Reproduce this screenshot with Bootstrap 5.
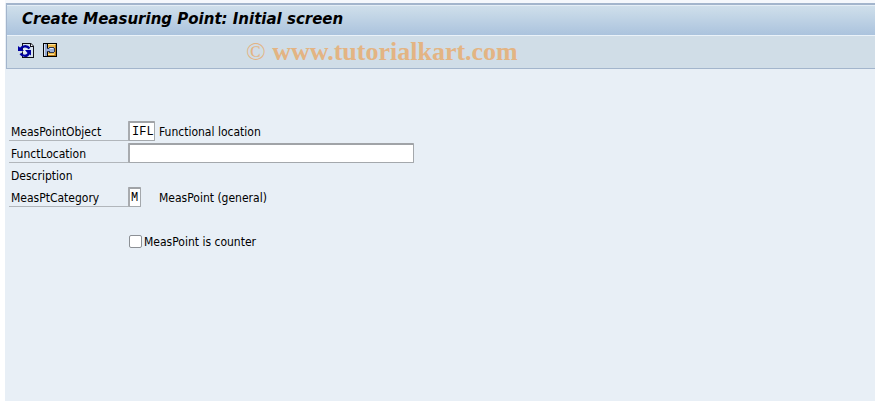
<!DOCTYPE html>
<html lang="en">
<head>
<meta charset="utf-8">
<meta name="viewport" content="width=device-width, initial-scale=1">
<title>Create Measuring Point: Initial screen</title>
<link href="https://cdn.jsdelivr.net/npm/bootstrap@5.3.0/dist/css/bootstrap.min.css" rel="stylesheet">
<style>
body { background: #fff; color: #000; font-family: Tahoma, "DejaVu Sans Condensed", "Noto Sans", sans-serif; font-size: 12px; line-height: 22px; }
.sap-window { margin-left: 5px; background: #e8eff6; }
.sap-top { height: 3px; background: #f5f8fc; }
.sap-head { margin-left: 1px; border: 1px solid #a3b5cc; border-top-width: 2px; border-right-width: 0; background: #d0dde7; }
.sap-title { height: 31px; padding-left: 15px; border-top: 1px solid #e4eef6; border-bottom: 1px solid #eaf2f9; background: linear-gradient(#cfdfeb, #abc3dd); }
.sap-title h1 { font-family: "DejaVu Sans", Verdana, sans-serif; font-size: 15px; line-height: 26px; font-weight: 700; font-style: italic; }
.sap-tools { height: 32px; padding-left: 11px; }
.tool-btn { width: 16px; height: 16px; margin-bottom: 4px; }
.brand-text { margin-left: 188px; font: 700 26px/32px "Liberation Serif", serif; color: #e3b483; }
.brand-text span { font-weight: 400; }
.sap-form { padding: 52px 0 0 4px; row-gap: 2px; }
.field-row { height: 20px; }
.field-label { width: 119px; height: 20px; padding-left: 2px; }
.ruled { border-bottom: 1px solid #b1b6bb; }
.field-box { height: 20px; padding: 0 0 0 2px; border: 1px solid #a4a8ac; border-top: 2px solid #a0a3a7; border-left: 2px solid #a8abaf; border-radius: 1px; background: #fff; color: #000; font: 12px/16px "Courier New", "Liberation Mono", monospace; }
.w-code { width: 27px; }
.w-one { width: 13px; padding-left: 1px; }
.w-long { width: 286px; max-width: calc(100% - 123px); }
.gap-code { margin-left: 4px; }
.gap-one { margin-left: 18px; }
.counter-row { margin-top: 22px; padding-left: 120px; }
.counter-row label { height: 20px; }
.counter-row input { appearance: none; width: 13px; height: 13px; margin: 0 2px 0 0; border: 1px solid #8c9095; border-radius: 2px; background: #fff; }
.counter-row input:checked { background: #4b6a93; }
</style>
<script src="https://cdn.jsdelivr.net/npm/bootstrap@5.3.0/dist/js/bootstrap.bundle.min.js"></script>
</head>
<body>
<main class="sap-window min-vh-100">
  <div class="sap-top"></div>
  <header class="sap-head">
    <div class="sap-title"><h1 class="m-0 text-nowrap">Create Measuring Point: Initial screen</h1></div>
    <div class="sap-tools d-flex align-items-center">
      <button type="button" class="tool-btn btn p-0 border-0 d-flex" aria-label="Other object">
        <svg width="16" height="16" viewBox="0 0 16 16">
          <path d="M4 1h9l3 3v12H4z" fill="#101018"/>
          <path d="M5 2h7v3h3v10H5z" fill="#d6e2ee"/><path d="M13 2v2h2z" fill="#fff"/>
          <circle cx="7" cy="9" r="2.5" fill="#e6edf6"/>
          <path d="M2.5 7.5C3.5 3.8 9 3 11.5 6.5M11 11C9.500 15 4.500 14.500 2.500 11.500" fill="none" stroke="#0000a0" stroke-width="2.300"/>
          <path d="M0 4v5h6L4 7zM13 13.500V8H7l2 2.500z" fill="#0000a0"/>
        </svg>
      </button>
      <button type="button" class="tool-btn btn p-0 border-0 d-flex ms-2" aria-label="Class selection">
        <svg width="16" height="16" viewBox="0 0 16 16" shape-rendering="crispEdges">
          <path d="M1 1h14v14H1z" fill="#000"/>
          <path d="M2 2h3v12H2z" fill="#91a6cf"/><path d="M2 2h1v12H2z" fill="#d5e0f2"/>
          <path d="M6 2h8v12H6z" fill="#eab645"/><path d="M6 2h7v1H6zM6 12h6v1H6z" fill="#ffe39a"/><path d="M13 3h1v11H6v-1h7z" fill="#b77a18"/>
          <path d="M7 5h5v1h1v4h-1v1H7v-1H5V6h2z" fill="#30364c"/><path d="M4 7h3v2H4zM7 6h5v4H8V9H7z" fill="#9cafd6"/><path d="M8 6h3v1H8z" fill="#e2eaf8"/>
        </svg>
      </button>
      <div class="brand-text text-nowrap"><span>©</span> www.tutorialkart.com</div>
    </div>
  </header>
  <form class="sap-form d-flex flex-column">
    <div class="field-row d-flex">
      <label class="field-label ruled" for="object">MeasPointObject</label>
      <input id="object" class="field-box w-code" value="IFL">
      <span class="gap-code">Functional location</span>
    </div>
    <div class="field-row d-flex">
      <label class="field-label ruled" for="location">FunctLocation</label>
      <input id="location" class="field-box w-long">
    </div>
    <div class="field-row d-flex"><span class="field-label">Description</span></div>
    <div class="field-row d-flex">
      <label class="field-label ruled" for="category">MeasPtCategory</label>
      <input id="category" class="field-box w-one" value="M">
      <span class="gap-one">MeasPoint (general)</span>
    </div>
    <div class="counter-row field-row d-flex align-items-center">
      <input id="counter" type="checkbox"><label for="counter">MeasPoint is counter</label>
    </div>
  </form>
</main>
</body>
</html>
